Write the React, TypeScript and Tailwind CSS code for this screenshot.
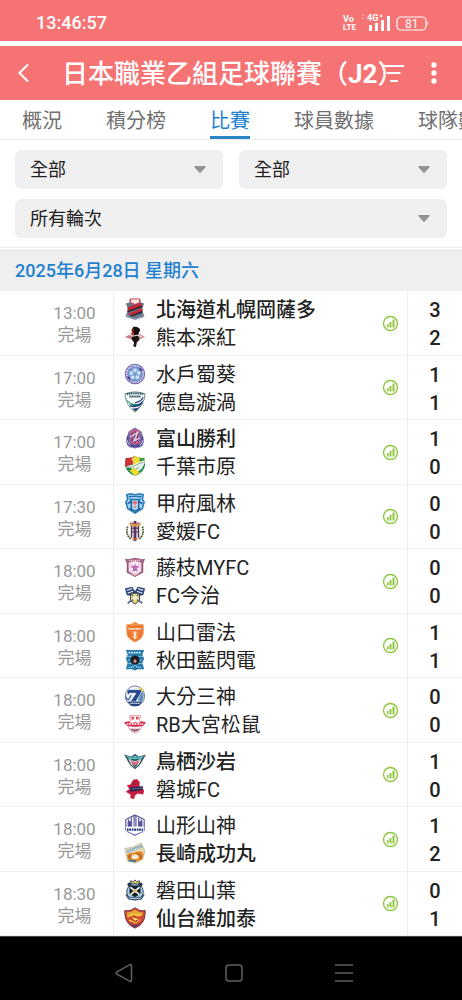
import type { ReactNode } from "react";

type Team = { name: string; score: number; crest: keyof typeof crests; winner?: boolean };
type Match = { time: string; home: Team; away: Team };

const matches: Match[] = [
  { time: "13:00", home: { name: "北海道札幌岡薩多", score: 3, crest: "sapporo", winner: true }, away: { name: "熊本深紅", score: 2, crest: "kumamoto" } },
  { time: "17:00", home: { name: "水戶蜀葵", score: 1, crest: "mito" }, away: { name: "德島漩渦", score: 1, crest: "tokushima" } },
  { time: "17:00", home: { name: "富山勝利", score: 1, crest: "toyama", winner: true }, away: { name: "千葉市原", score: 0, crest: "chiba" } },
  { time: "17:30", home: { name: "甲府風林", score: 0, crest: "kofu" }, away: { name: "愛媛FC", score: 0, crest: "ehime" } },
  { time: "18:00", home: { name: "藤枝MYFC", score: 0, crest: "fujieda" }, away: { name: "FC今治", score: 0, crest: "imabari" } },
  { time: "18:00", home: { name: "山口雷法", score: 1, crest: "yamaguchi" }, away: { name: "秋田藍閃電", score: 1, crest: "akita" } },
  { time: "18:00", home: { name: "大分三神", score: 0, crest: "oita" }, away: { name: "RB大宮松鼠", score: 0, crest: "omiya" } },
  { time: "18:00", home: { name: "鳥栖沙岩", score: 1, crest: "tosu", winner: true }, away: { name: "磐城FC", score: 0, crest: "iwaki" } },
  { time: "18:00", home: { name: "山形山神", score: 1, crest: "yamagata" }, away: { name: "長崎成功丸", score: 2, crest: "nagasaki", winner: true } },
  { time: "18:30", home: { name: "磐田山葉", score: 0, crest: "iwata" }, away: { name: "仙台維加泰", score: 1, crest: "sendai", winner: true } },
];

const tabs = ["概況", "積分榜", "比賽", "球員數據", "球隊數據"];

export default function App() {
  return (
    <div className="overflow-hidden bg-white font-[Roboto,'Noto_Sans_CJK_TC',sans-serif] text-[#222]">
      <StatusBar />
      <Header />
      <nav className="flex h-10 gap-11 overflow-hidden border-b border-[#e8e8e8] pl-[22px]">
        {tabs.map((tab) => (
          <button
            key={tab}
            type="button"
            className={
              tab === "比賽"
                ? "shrink-0 border-b-3 border-[#2a84c8] pt-1.5 text-xl leading-[30px] text-[#1f80d0]"
                : "shrink-0 border-b-3 border-transparent pt-1.5 text-xl leading-[30px] text-[#707070]"
            }
          >
            {tab}
          </button>
        ))}
      </nav>
      <main>
        <form className="grid grid-cols-2 gap-x-4 gap-y-2.5 border-b border-[#ebebeb] px-[15px] pt-2.5 pb-[9px]">
          <Filter label="賽季" value="全部" />
          <Filter label="球隊" value="全部" />
          <Filter label="輪次" value="所有輪次" className="col-span-2" />
        </form>
        <h2 className="mt-px bg-[#efefef] px-[15px] pt-0.5 text-lg leading-10 font-medium text-[#1f80d0]">2025年6月28日 星期六</h2>
        <ul>
          {matches.map((match) => (
            <MatchRow key={match.home.name} match={match} />
          ))}
        </ul>
      </main>
      <SystemNav />
    </div>
  );
}

function StatusBar() {
  return (
    <div className="flex h-[41px] items-center justify-between bg-[#f57373] pt-1 pr-8 pl-9 text-white">
      <span className="text-lg leading-6 font-medium">13:46:57</span>
      <svg className="h-5 w-[88px]" viewBox="0 0 88 20" fill="#fff">
        <g fontFamily="Roboto, sans-serif" fontWeight="700">
          <text x="1" y="9" fontSize="9">Vo</text>
          <text x="1" y="17" fontSize="8" textRendering="geometricPrecision">LTE</text>
          <text x="25" y="8" fontSize="9">4G</text>
        </g>
        <path d="M37.500 3h3M39 1.500v3" stroke="#fff" strokeWidth="1" />
        <path d="M20 2h2v1h-2zM20 5h2v1h-2z" opacity=".5" />
        <path d="M27 12h3v6h-3zM33 10h3v8h-3zM39 7h3v11h-3zM45 3h3v15h-3z" />
        <rect x="55" y="4" width="29" height="13" rx="4" fill="none" stroke="#fff" strokeWidth="1.200" />
        <path d="M85.500 8.500c1 .5 1 3.500 0 4z" />
        <text x="63" y="15" fontSize="12" fontFamily="Roboto, sans-serif">81</text>
      </svg>
    </div>
  );
}

function Header() {
  return (
    <header className="mt-[5px] flex h-[54px] items-center bg-[#f57373] text-white">
      <button type="button" aria-label="返回" className="ml-3 grid size-6 shrink-0 place-items-center">
        <svg className="size-5" viewBox="0 0 20 20" fill="none" stroke="currentColor" strokeWidth="2">
          <path d="M14 1.500 5.500 10l8.500 8.500" />
        </svg>
      </button>
      <h1 className="ml-[26px] w-0 grow pt-0.5 text-[26px] font-medium whitespace-nowrap">
        日本職業乙組足球聯賽（<span className="font-bold">J2</span>）
      </h1>
      <button type="button" aria-label="篩選" className="grid size-6 shrink-0 place-items-center">
        <svg className="size-6" viewBox="0 0 24 24" fill="none" stroke="currentColor" strokeWidth="2">
          <path d="M1 5h21M4.500 12h14M8 20h8" />
        </svg>
      </button>
      <button type="button" aria-label="更多" className="mr-4 ml-4 grid size-6 shrink-0 place-items-center">
        <svg className="size-6" viewBox="0 0 24 24" fill="currentColor">
          <circle cx="12" cy="4" r="2.700" />
          <circle cx="12" cy="12" r="2.700" />
          <circle cx="12" cy="20" r="2.700" />
        </svg>
      </button>
    </header>
  );
}

function Filter({ label, value, className = "" }: { label: string; value: string; className?: string }) {
  return (
    <div className={`relative ${className}`}>
      <select aria-label={label} className="h-[39px] w-full appearance-none rounded-md bg-[#f0f0f0] px-[15px] text-lg text-[#222]">
        <option>{value}</option>
      </select>
      <svg className="pointer-events-none absolute top-4 right-[17px] h-[7px] w-3" viewBox="0 0 12 7" fill="#929292">
        <path d="M1 0h10a.7.700 0 0 1 .5 1.200L6.500 6.700q-.5.500-1 0L.5 1.200A.7.700 0 0 1 1 0Z" />
      </svg>
    </div>
  );
}

function MatchRow({ match }: { match: Match }) {
  const teams = [match.home, match.away];
  return (
    <li className="flex border-b border-[#f0f0f0] odd:h-[65px] even:h-16">
      <div className="flex w-[114px] shrink-0 flex-col items-center justify-center border-r border-[#ececec] pt-0.5 pl-9 text-[17px] leading-[22px] text-[#999]">
        <time>{match.time}</time>
        <span>完場</span>
      </div>
      <div className="flex min-w-0 grow flex-col justify-center pl-2.5">
        {teams.map((team) => (
          <div key={team.name} className="flex h-7 items-center gap-2.5 text-xl">
            <svg className="size-[22px] shrink-0" viewBox="0 0 24 24">{crests[team.crest]}</svg>
            <span className={team.winner ? "truncate pt-0.5 font-medium" : "truncate pt-0.5"}>{team.name}</span>
          </div>
        ))}
      </div>
      <button type="button" aria-label="數據" className="mr-2 grid w-[17px] shrink-0 place-items-center">
        <svg className="size-[17px]" viewBox="0 0 17 17" fill="#8fc63d">
          <circle cx="8.500" cy="8.500" r="7" fill="none" stroke="#8fc63d" strokeWidth="1.400" />
          <path d="M5 9h1.500v3.500H5zM7.500 7h2v5.500h-2zM10.500 4.500h2v8h-2z" />
        </svg>
      </button>
      <div className="flex w-[55px] shrink-0 flex-col items-center justify-center border-l border-[#ececec] pt-0.5 text-xl leading-7 font-medium">
        {teams.map((team) => (
          <span key={team.name}>{team.score}</span>
        ))}
      </div>
    </li>
  );
}

function SystemNav() {
  return (
    <footer className="flex h-16 items-center justify-center gap-[88px] border-t border-[#444] bg-black pt-2 pl-1.5 text-[#606060]">
      <button type="button" aria-label="上一頁">
        <svg className="size-[22px]" viewBox="0 0 22 22" fill="none" stroke="currentColor" strokeWidth="1.500">
          <path d="M18.500 3.500v15q0 1.500-1.500.800L3.500 12q-1-1 0-2L17 2.700q1.500-.7 1.500.8Z" />
        </svg>
      </button>
      <button type="button" aria-label="主畫面">
        <svg className="size-[22px]" viewBox="0 0 22 22" fill="none" stroke="currentColor" strokeWidth="1.500">
          <rect x="3" y="3" width="16" height="16" rx="3" />
        </svg>
      </button>
      <button type="button" aria-label="最近使用">
        <svg className="size-[22px]" viewBox="0 0 22 22" fill="none" stroke="currentColor" strokeWidth="1.500">
          <path d="M2 3h18M2 11h18M2 19h18" />
        </svg>
      </button>
    </footer>
  );
}

const crests = {
  sapporo: (
    <>
      <path d="M6 1h12v4l4 1-2 5 1 9-9 3-9-3 1-9-2-5 4-1z" fill="#66758a" />
      <path d="M7 1h10v4l-5 2-5-2z" fill="#f7e5e5" stroke="#b93b48" />
      <path d="M4 10 19 5v4L4 15zM5 17l15-6v4L8 20z" fill="#c5283c" />
      <path d="M4 15 20 9M7 20l13-5" stroke="#26262c" strokeWidth="1.500" />
      <path d="M3 17v3l9 3 9-3v-3" fill="none" stroke="#8b97a5" strokeWidth="2" />
    </>
  ),
  kumamoto: (
    <>
      <path d="m1 12 8-4h6l8 4-8 3H9z" fill="#c98080" />
      <path d="M10 1c5-1 9 2 7 5l-2 4 2 5-3 3-1 5-3-1 1-4-3-4 3-5-3-4z" fill="#171313" />
      <path d="m5 9 5 2 5-1 5 2" stroke="#fff" strokeWidth="1" fill="none" />
      <path d="M10 3 8 9l2 1zM15 15l-2 5" fill="#c92b33" stroke="#c92b33" strokeWidth=".6" />
    </>
  ),
  mito: (
    <>
      <circle cx="12" cy="12" r="10.500" fill="#f0effa" stroke="#7770b5" strokeWidth="1.400" />
      <circle cx="12" cy="12" r="8.300" fill="#6f9ad2" stroke="#8a82c0" strokeDasharray="1.500 1" strokeWidth="2" />
      <g fill="#c9e1f6" stroke="#6a85c1" strokeWidth=".5">
        <circle cx="12" cy="8" r="2.500" />
        <circle cx="16" cy="11" r="2.500" />
        <circle cx="14.500" cy="15.500" r="2.500" />
        <circle cx="9.500" cy="15.500" r="2.500" />
        <circle cx="8" cy="11" r="2.500" />
      </g>
      <path d="m17 4 4 5-4-1zM3 15l4 5-1-5z" fill="#443385" />
    </>
  ),
  tokushima: (
    <>
      <path d="M1 3q11-4 22 0-1 13-11 20Q2 16 1 3Z" fill="#f8fcfc" stroke="#608782" />
      <path d="M3 3.500q9-2 18 0M6 6h12" fill="none" stroke="#26495b" strokeWidth="2" strokeDasharray="1.500 .6" />
      <path d="M2 7q3 9 17 7l-2 2Q5 18 2 7" fill="#168a6a" />
      <path d="M6 15q7 3 15-5l-2 5q-6 4-12 2zM9 19q5 1 9-3l-5 6-2-1z" fill="#1f3d78" />
      <path d="M12 13q6-1 9-6" fill="none" stroke="#21417c" strokeWidth="1.300" />
    </>
  ),
  toyama: (
    <>
      <path d="M12 .5 16 3l3 2 3 10-2 6-8 2.500L4 21l-2-6L5 5l3-2z" fill="#7d6cab" />
      <path d="M7 5q5-4 10 0v12q-5 4-10 0z" fill="#e0597a" />
      <path d="M9 6v10M12 4v14M15 6v10" stroke="#3a55a3" strokeWidth="1.500" />
      <path d="m7 11 8-5-4 9 6-3" fill="none" stroke="#f7dfe9" strokeWidth="1.200" />
      <path d="M4 10v7q3 4 8 4t8-4v-7M7 22l3-3m7 3-3-3" fill="none" stroke="#43488f" strokeWidth="1.700" />
      <path d="M3 14q1 4 4 6M21 14q-1 4-4 6" fill="none" stroke="#e2d3ec" strokeWidth="1" />
    </>
  ),
  chiba: (
    <>
      <path d="M2 3q5 1 10-2 5 3 10 2l1 8q-1 8-11 12Q2 19 1 11z" fill="#178b4b" />
      <path d="M2 3q5 1 10-2l-3 9-8 3z" fill="#cf3038" />
      <path d="M12 1q5 3 10 2l1 6-14 3zM6 17l6 6 5-4-5-5z" fill="#f5dc2b" />
      <path d="M8 4l4-3 2 1-3 8z" fill="#ead54b" />
      <path d="M17 3q4 1 5 0l1 6-6 1z" fill="#3a9a45" />
      <path d="M1 14q4-4 9-3 8-5 13-5-2 10-8 12-2-5-6-3-3-2-8-1Z" fill="#e9f0e9" />
      <path d="M3 13q5 1 8-1 5-3 10-4M13 15l4-1" stroke="#90a396" fill="none" />
    </>
  ),
  kofu: (
    <>
      <path d="m3 3 4-1 5 1 5-1 4 1-1 5 2 3-2 7-8 5-8-5-2-7 2-3z" fill="#a7d7ee" stroke="#287bb9" strokeWidth="1.700" />
      <path d="M5 5h14M6 8h12" stroke="#2475b6" strokeWidth="2" />
      <path d="M8 6.500h8" stroke="#e8f6fc" />
      <path d="m12 9 3 3-3 6-3-6z" fill="#dc7483" />
      <path d="m4 13 4-3v9M20 13l-4-3v9M6 18l6 3 6-3" stroke="#1d61a1" strokeWidth="1.700" fill="none" />
      <path d="m9 13 3 2 3-2" stroke="#fff" fill="none" />
    </>
  ),
  ehime: (
    <>
      <path d="M6 3h12v16l-6 4-6-4z" fill="#f6efdc" />
      <path d="M10.500 1h3v22h-3z" fill="#5b326d" />
      <path d="M7.500 6H9v13H7.500zM15 6h1.500v13H15z" fill="#453967" />
      <path d="M6 3q6 2 12 0v3q-6 2-12 0z" fill="#d99a4c" />
      <path d="M7 3q5 2 10 0" stroke="#8c4258" strokeWidth="1" fill="none" />
      <path d="M4 7q-3 9 4 14M20 7q3 9-4 14" fill="none" stroke="#55663f" strokeWidth="2" strokeDasharray="2 .6" />
      <path d="M9 9h6M9 13h6" stroke="#5b326d" strokeWidth="1.500" />
      <path d="M9 20h6l-3 3z" fill="#d5502d" />
    </>
  ),
  fujieda: (
    <>
      <path d="m1 3 5 1 6-2 6 2 5-1-2 5v10l-9 5-9-5V8z" fill="#8a5b74" />
      <path d="m5 7 7-2 7 2v10l-7 4-7-4z" fill="#f8e9f4" stroke="#c87ea7" />
      <path d="M3 4q9-3 18 0v3q-9-3-18 0z" fill="#a86a84" />
      <path d="m12 8 1 3h3l-2 3 1 3-3-1-3 1 1-3-2-3h3z" fill="#b46ab8" />
      <path d="M8 9v4m8-4v4M8 19l4 2 4-2" stroke="#eba4b2" strokeWidth="1.500" fill="none" />
      <path d="M6 5h12" stroke="#fff" strokeDasharray="1 1" />
    </>
  ),
  imabari: (
    <>
      <path d="m1 5 8-2 3 5 3-5 8 2-2 7-5 1-4 3-4-3-5-1z" fill="#273f78" />
      <path d="m3 7 6-2m-5 5 6-2m11-1-6-2m5 5-6-2" stroke="#dce3ef" strokeWidth="1.300" />
      <path d="M7 10h10v8l-5 4-5-4z" fill="#e9d663" stroke="#26345e" />
      <path d="m8 11 8 8m0-8-8 8" stroke="#3d5079" strokeWidth="1.200" />
      <circle cx="12" cy="15" r="2.800" fill="#f2ead0" />
      <path d="m8 18-4 3m12-3 4 3" stroke="#596c92" strokeWidth="1.800" />
    </>
  ),
  yamaguchi: (
    <>
      <path d="M3 4q5 1 9-3 4 4 9 3v9q0 6-9 10Q3 19 3 13z" fill="#ed782d" stroke="#f0a26a" />
      <path d="M5 8.500h14" stroke="#fff1e6" strokeWidth="2" strokeDasharray="1.500 .5" />
      <path d="M7 11h10l-2 7-3 3-3-3z" fill="#f08a45" />
      <path d="m12 11 2 2-1 2 1 3-2 2-2-2 1-3-1-2z" fill="#fbe0c8" />
      <path d="m8 5 4-2 4 2" stroke="#f8b166" fill="none" />
    </>
  ),
  akita: (
    <>
      <path d="M2 1h20l-2 5 2 5-2 4 2 7h-7l-3 1.500L9 22H2l2-7-2-4 2-5z" fill="#2378ac" />
      <path d="M5 4h14" stroke="#d7edf8" strokeWidth="2" strokeDasharray="2 .8" />
      <path d="M3 8h18M4 12h16M4 16h16" stroke="#8cc4e2" strokeWidth="1" />
      <circle cx="12" cy="12" r="5" fill="#1a1d24" />
      <path d="m10 13 2-2 2 2-1 2h-2z" fill="#d9977e" />
      <path d="M5 20h4l3-2 3 2h4" stroke="#a5d3ea" strokeWidth="1.500" strokeDasharray="1.500 .7" fill="none" />
    </>
  ),
  oita: (
    <>
      <ellipse cx="12" cy="12" rx="10.500" ry="11" fill="#f4f6fa" stroke="#62759b" />
      <path d="M17 2q7 7 3 16l-5-1 3-8z" fill="#5e92bd" />
      <path d="M3 5h17l-2 5-5 8H7l6-9H6l-2 3z" fill="#26488d" stroke="#fff" strokeWidth=".7" />
      <path d="m17 3 4 4" stroke="#e4c947" strokeWidth="2" />
      <path d="M2 13q1 3 3 3l3-5" fill="none" stroke="#456ca8" strokeWidth="1.500" />
      <path d="M4 18h16l-4 5H8z" fill="#244480" />
      <path d="M7 20h10" stroke="#dbe1ee" strokeWidth="1.300" strokeDasharray="1.500 .6" />
    </>
  ),
  omiya: (
    <>
      <path d="M6 3h12l-1 5 3 5-3 6-5 3-5-3-3-6 3-5z" fill="#fff" stroke="#df8794" />
      <path d="M8 4h3v3H8zM13 4h3v3h-3z" fill="#d3546a" />
      <path d="m0 10 5-1 3 2 4-1 4 1 3-2 5 1-3 4-6 1h-6l-6-1z" fill="#d6294c" />
      <path d="M3 12h18" stroke="#fff" strokeWidth="1.500" strokeDasharray="2 .8" />
      <path d="M6 17h12l-2 2-4 2-4-2z" fill="#dfa0ac" />
      <path d="m8 18 4 1 4-1" stroke="#4a4d6a" strokeWidth="1.200" fill="none" />
    </>
  ),
  tosu: (
    <>
      <path d="m0 5 8 2 4-3 4 3 8-2-4 7-3 5-5 4-5-4-3-5z" fill="#405961" />
      <path d="m2 6 7 2 3-2 3 2 7-2-4 5H6z" fill="#58b7b8" />
      <path d="m5 10 3 6 4 3 4-3 3-6-7 2z" fill="#d9e7e6" />
      <path d="m7 11 5 2 5-2-2 5H9z" fill="#d86c80" />
      <path d="m10 16 2 2 2-2M8 10l4 1 4-1" stroke="#22515b" strokeWidth="1.200" fill="none" />
    </>
  ),
  iwaki: (
    <>
      <path d="m10 2 4-1 3 3v6l5 3-1 5-6-1-3 2-1 4-4-1v-4l-5-3 4-3-3-4 4-1z" fill="#c91c41" />
      <path d="m10 3 4 1-1 4-4 1zM4 14l7-2 1 2-8 2z" fill="#a51e4d" />
      <path d="m6 10 15-1-1 4-12 2z" fill="#26294f" />
      <path d="m9 12 10-1" stroke="#9d91ba" strokeDasharray="2 .8" />
    </>
  ),
  yamagata: (
    <>
      <path d="m12 1 10 5v12l-10 5-10-5V6z" fill="#f7f7fc" stroke="#484d93" strokeWidth="1.200" />
      <path d="M5 6v8m3-10v10m3-12v12m2-12v12m3-10v10m3-8v8" stroke="#50519b" strokeWidth="1.200" />
      <path d="M4 8h4v6H4zM16 8h4v6h-4z" fill="#555498" />
      <path d="M2 14h20v5l-10 4-10-4z" fill="#fff" />
      <path d="M3 17h18" stroke="#26377e" strokeWidth="2.500" strokeDasharray="2 .7" />
      <path d="m3 19 9 4 9-4" fill="none" stroke="#666aad" />
    </>
  ),
  nagasaki: (
    <>
      <path d="m1 7 7-1 11-5 4 9-3 9-8 4-8-2z" fill="#e5d9ae" stroke="#b5b3a8" strokeWidth=".8" />
      <path d="m3 9 16-6 1 3-16 6z" fill="#8ba9c4" />
      <path d="m5 10 13-4" stroke="#edf1f1" strokeWidth="1.200" strokeDasharray="1.500 1" />
      <path d="M3 15q2-4 7-3 8-4 11 0l-1 7-8 3-7-2z" fill="#e58c26" />
      <path d="M9 16q-5-3-3 2m8-6q4 2 5 6" stroke="#b65222" fill="none" strokeWidth="1.500" />
      <ellipse cx="12" cy="16" rx="4" ry="2.500" fill="#f5ead8" />
      <path d="m5 20 8 1" stroke="#4c7196" strokeWidth="2" />
    </>
  ),
  iwata: (
    <>
      <path d="m7 2 3 1 2-2 2 2 3-1-1 5H8z" fill="#e5ce61" stroke="#39466b" />
      <circle cx="12" cy="14" r="9" fill="#a9cfe0" stroke="#24375d" />
      <path d="M6 7h12v9l-6 4-6-4z" fill="#16202e" />
      <path d="m7 9 10 8M17 9 7 17" stroke="#f0f2ec" strokeWidth="1.800" />
      <circle cx="6" cy="6" r="2.300" fill="#263c56" />
      <circle cx="18" cy="6" r="2.300" fill="#263c56" />
      <path d="m2 17 4 3h12l4-3-3 5H5z" fill="#6ea8c8" stroke="#253e61" />
      <path d="M7 21h10" stroke="#fff" strokeDasharray="1.500 .7" />
      <circle cx="12" cy="13" r="2" fill="#dac364" />
    </>
  ),
  sendai: (
    <>
      <path d="M1 4q6 1 11-3 5 4 11 3 1 14-11 19Q0 18 1 4Z" fill="#cf4938" stroke="#863a4b" strokeWidth="1.200" />
      <path d="M3 6q5 0 9-3 4 3 9 3l-3 4q-7-4-14 2z" fill="#e6a632" />
      <path d="m3 11 6-4 8 1 4-1-3 3-6 1 6 3-5 4-8-3 3-3z" fill="#f2cc37" />
      <path d="m5 11 6-2 7 3-5 5-6-3z" fill="#c94331" />
      <path d="m8 11 8 2-4 2z" fill="#f6df70" />
      <path d="m6 18 6 2 6-2-6 4z" fill="#3b416f" />
    </>
  ),
} satisfies Record<string, ReactNode>;
